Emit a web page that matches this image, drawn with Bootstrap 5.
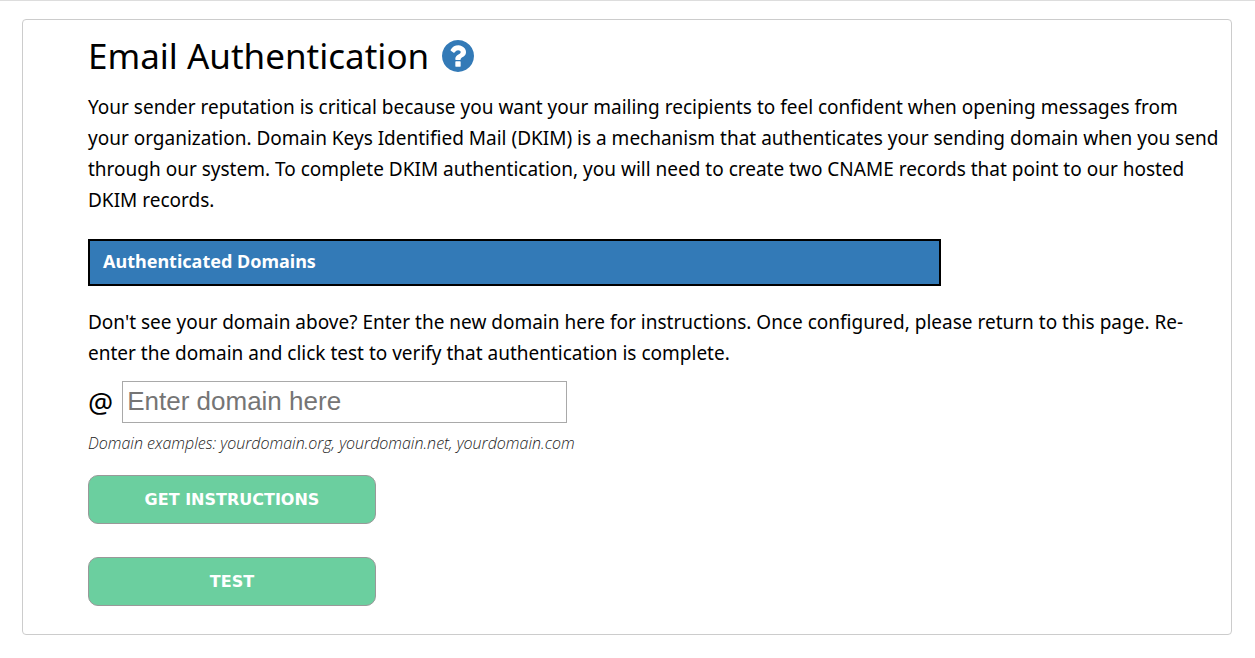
<!DOCTYPE html>
<html lang="en">
<head>
<meta charset="utf-8">
<meta name="viewport" content="width=device-width, initial-scale=1">
<title>Email Authentication</title>
<link href="https://cdn.jsdelivr.net/npm/bootstrap@5.3.0/dist/css/bootstrap.min.css" rel="stylesheet">
<style>
  body { font-family: "Noto Sans", "Open Sans", sans-serif; font-size: 19px; line-height: 31px; color: #000; border-top: 1px solid #ddd; }
  .panel { margin: 18px 23px 22px 22px; padding: 16px 8px 28px 65px; border-color: #ccc; border-radius: 4px; color: #000; }
  .panel-title { font-size: 35px; line-height: 40px; font-weight: 400; gap: 13px; margin-bottom: 16px; }
  .help-icon { width: 32px; height: 32px; display: block; }
  .domain-table { width: 853px; max-width: 100%; margin: 23px 0 21px; border-collapse: separate; border-spacing: 0; }
  .domain-table th { background: #337ab7; color: #fff; border: 2px solid #000; padding: 5px 13px 7px; font-size: 18px; line-height: 31px; font-weight: 700; }
  .domain-row { gap: 9px; margin-top: 12px; font-size: 28px; }
  .domain-input { width: 445px; height: 42px; padding: 0 4px 2px; border: 1px solid #a9a9a9; border-radius: 0; font-family: "Liberation Sans", Arial, sans-serif; font-size: 26px; }
  .domain-input::placeholder { color: #757575; }
  .examples { font-family: "Open Sans", "Noto Sans", sans-serif; font-size: 16px; line-height: 20px; font-weight: 300; font-style: italic; margin: 10px 0 22px; color: #222; }
  .action-list { gap: 33px; }
  .btn-action { width: 288px; height: 49px; border: 1px solid #999; border-radius: 10px; background: #6bcf9f; color: #fff; font-family: "DejaVu Sans", Verdana, sans-serif; font-size: 16px; font-weight: 700; }
  .btn-action:hover { background: #58bd8c; color: #fff; }
</style>
</head>
<body>
<main class="card panel">
  <h1 class="panel-title d-flex align-items-center">Email Authentication
    <a href="#" aria-label="Help">
      <svg class="help-icon" viewBox="0 0 1536 1536" aria-hidden="true"><path fill="#337ab7" d="M896 1248v-192q0-14-9-23t-23-9H672q-14 0-23 9t-9 23v192q0 14 9 23t23 9h192q14 0 23-9t9-23zm256-672q0-88-55.500-163T958 297t-170-41q-243 0-371 213-15 24 8 42l132 100q7 6 19 6 16 0 25-12 53-68 86-92 34-24 86-24 48 0 85.500 26t37.500 59q0 38-20 61t-68 45q-63 28-115.500 86.500T640 892v36q0 14 9 23t23 9h192q14 0 23-9t9-23q0-19 21.500-49.500T972 829q32-18 49-28.500t46-35 44.500-48 28-60.500 12.500-81zm384 192q0 209-103 385.500T1153.500 1433 768 1536t-385.500-103T103 1153.500 0 768t103-385.500T382.500 103 768 0t385.500 103T1433 382.500 1536 768z"/></svg>
    </a>
  </h1>
  <p class="mb-0">Your sender reputation is critical because you want your mailing recipients to feel confident when opening messages from your organization. Domain Keys Identified Mail (DKIM) is a mechanism that authenticates your sending domain when you send through our system. To complete DKIM authentication, you will need to create two CNAME records that point to our hosted DKIM records.</p>
  <table class="domain-table">
    <thead><tr><th scope="col">Authenticated Domains</th></tr></thead>
  </table>
  <p class="mb-0">Don't see your domain above? Enter the new domain here for instructions. Once configured, please return to this page. Re-enter the domain and click test to verify that authentication is complete.</p>
  <form>
    <div class="domain-row d-flex align-items-center">
      <label for="domain">@</label>
      <input class="domain-input mw-100" type="text" id="domain" placeholder="Enter domain here" aria-describedby="examples">
    </div>
    <p class="examples" id="examples">Domain examples: yourdomain.org, yourdomain.net, yourdomain.com</p>
    <div class="action-list d-flex flex-column align-items-start">
      <button class="btn btn-action" type="button">GET INSTRUCTIONS</button>
      <button class="btn btn-action" type="submit">TEST</button>
    </div>
  </form>
</main>
<script src="https://cdn.jsdelivr.net/npm/bootstrap@5.3.0/dist/js/bootstrap.bundle.min.js"></script>
</body>
</html>
